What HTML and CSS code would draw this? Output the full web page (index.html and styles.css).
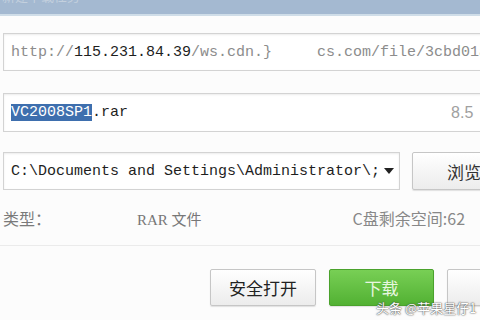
FILE: index.html
```html
<!DOCTYPE html>
<html>
<head>
<meta charset="utf-8">
<link rel="stylesheet" href="styles.css">
</head>
<body>
<div class="window">
  <div class="titlebar"><span class="title">新建下载任务</span></div>
  <div class="content">
    <div class="field url">
      <span class="dim">http://</span><span class="dark">115.231.84.39</span><span class="dim">/ws.cdn.}     cs.com/file/3cbd01a7e5</span>
    </div>
    <div class="field name">
      <span class="sel">VC2008SP1</span><span class="dark">.rar</span>
      <span class="size">8.5</span>
    </div>
    <div class="pathrow">
      <div class="field path">
        <span class="pathtext">C:\Documents and Settings\Administrator\;</span>
        <span class="caret"></span>
      </div>
      <div class="btn browse">浏览</div>
    </div>
    <div class="info">
      <span class="label">类型：</span>
      <span class="blank"></span>
      <span class="type">RAR 文件</span>
      <span class="space">C盘剩余空间:62</span>
    </div>
  </div>
  <div class="footer">
    <div class="btn plain">安全打开</div>
    <div class="btn green">下载</div>
    <div class="btn plain last">取消</div>
    <span class="watermark">头条 @苹果星仔1</span>
  </div>
</div>
</body>
</html>
```
FILE: styles.css
```css
html, body {
  margin: 0;
  padding: 0;
  width: 480px;
  height: 320px;
  overflow: hidden;
  background: #fcfcfc;
}
.window {
  position: relative;
  width: 600px;
  height: 320px;
  font-family: "Noto Sans CJK SC", sans-serif;
}
.titlebar {
  height: 14px;
  background: #a4b9d1;
  border-bottom: 2px solid #cfdde8;
  overflow: hidden;
}
.title {
  display: block;
  margin-top: -11px;
  margin-left: 2px;
  font-size: 13px;
  line-height: 14px;
  color: #c3d0de;
}
.content {
  padding: 17px 0 0 3px;
}
.field {
  box-sizing: border-box;
  background: #ffffff;
  border: 1px solid #d3d3d3;
  box-shadow: inset 0 1px 2px #ececec;
  font-family: "Liberation Mono", monospace;
  font-size: 15px;
  display: flex;
  align-items: center;
  padding-left: 7px;
  white-space: pre;
  overflow: hidden;
}
.url {
  height: 38px;
  width: 560px;
}
.dim { color: #8c8c8c; }
.dark { color: #1e1e1e; }
.name {
  margin-top: 22px;
  height: 39px;
  width: 560px;
}
.sel {
  background: #3e6fae;
  color: #ffffff;
}
.size {
  margin-left: 323px;
  color: #a0a0a0;
  font-family: "Liberation Sans", sans-serif;
  font-size: 16px;
}
.pathrow {
  margin-top: 20px;
  display: flex;
  gap: 12px;
}
.path {
  width: 397px;
  height: 38px;
  color: #1e1e1e;
}
.pathtext {
  width: 368px;
  overflow: hidden;
}
.caret {
  margin-left: 5px;
  width: 0;
  height: 0;
  border-left: 5px solid transparent;
  border-right: 5px solid transparent;
  border-top: 6px solid #222;
}
.btn {
  box-sizing: border-box;
  border: 1px solid #c6c6c6;
  border-radius: 2px;
  background: linear-gradient(#ffffff, #ececec);
  box-shadow: 0 1px 1px #e0e0e0;
  display: flex;
  align-items: center;
  justify-content: center;
  font-size: 17px;
  color: #333;
}
.browse {
  width: 120px;
  height: 38px;
  justify-content: flex-start;
  padding-left: 34px;
}
.info {
  margin-top: 14px;
  height: 28px;
  display: flex;
  align-items: center;
  color: #7a7a7a;
}
.label {
  font-size: 16px;
  width: 64px;
}
.blank {
  width: 70px;
}
.type {
  font-family: "Liberation Serif", "Noto Sans CJK SC", serif;
  font-size: 15px;
  color: #777;
}
.space {
  margin-left: 151px;
  font-size: 16px;
  color: #888;
}
.footer {
  margin-top: 13px;
  border-top: 1px solid #ebebeb;
  padding: 23px 0 0 210px;
  display: flex;
  gap: 13px;
}
.plain {
  width: 106px;
  height: 37px;
  color: #222;
}
.green {
  width: 105px;
  height: 37px;
  border-color: #4aa22c;
  background: linear-gradient(#78cf55, #52b133);
  color: #e8f7e0;
}
.last {
  width: 100px;
  color: #bbb;
}
.watermark {
  position: absolute;
  left: 376px;
  top: 298px;
  font-size: 13px;
  color: #ffffff;
  text-shadow: 0 0 2px #555, 0 0 1px #333;
}
```
